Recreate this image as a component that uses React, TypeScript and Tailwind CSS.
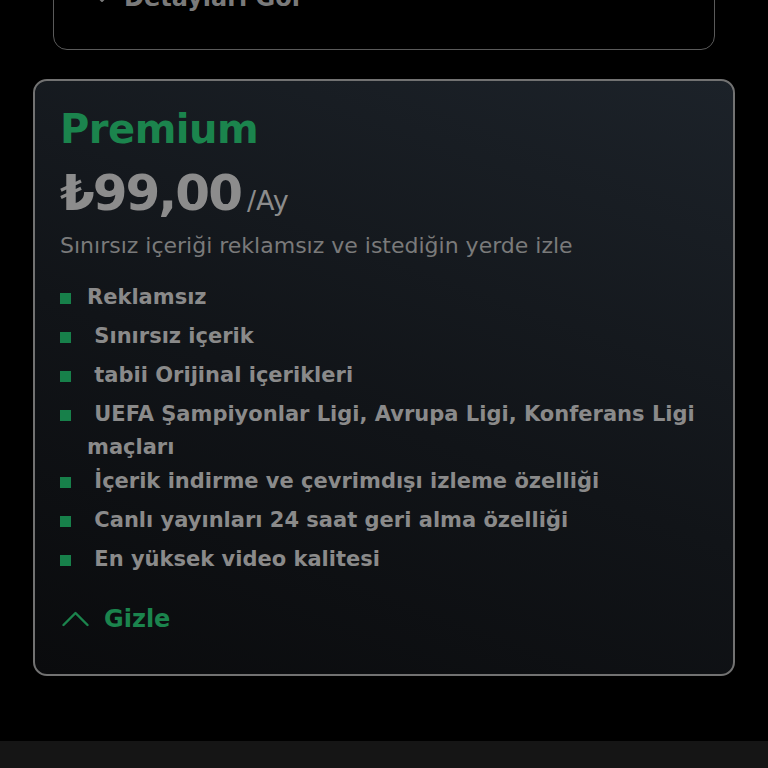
import { ChevronDown } from "lucide-react";

const features = [
  "Reklamsız",
  " Sınırsız içerik",
  " tabii Orijinal içerikleri",
  " UEFA Şampiyonlar Ligi, Avrupa Ligi, Konferans Ligi maçları",
  " İçerik indirme ve çevrimdışı izleme özelliği",
  " Canlı yayınları 24 saat geri alma özelliği",
  " En yüksek video kalitesi",
];

export default function App() {
  return (
    <div
      className="w-[768px] h-[768px] overflow-hidden bg-black flex flex-col"
      style={{ fontFamily: "'DejaVu Sans', Inter, sans-serif" }}
    >
      <div className="mx-[53px] -mt-[31px] h-[81px] rounded-[14px] border-[1.5px] border-[#5a5a5a] px-[36px] pt-[12px] flex items-start gap-[10px] shrink-0">
        <ChevronDown className="w-6 h-8 text-[#7a7a7a]" strokeWidth={2} />
        <span className="text-[24px] leading-8 font-bold text-[#7a7a7a]">Detayları Gör</span>
      </div>

      <div className="mx-[33px] mt-[29px] h-[597px] rounded-[14px] border-2 border-[#727272] bg-[linear-gradient(200deg,#1c2229_0%,#111418_55%,#0a0b0d_100%)] px-[25px] pt-[26px] shrink-0">
        <h2 className="text-[40px] leading-[44px] font-bold text-[#1b844d] tracking-[-0.5px]">Premium</h2>
        <div className="flex items-baseline mt-[14px]">
          <span className="text-[50px] leading-[56px] font-bold text-[#8c8c8c] tracking-[-2px]">₺99,00</span>
          <span className="text-[27px] text-[#8c8c8c] ml-[6px]">/Ay</span>
        </div>
        <p className="text-[22px] leading-7 text-[#7a7a7a] mt-[10px]">
          Sınırsız içeriği reklamsız ve istediğin yerde izle
        </p>
        <ul className="mt-[21px] flex flex-col gap-[6px]">
          {features.map((f, i) => (
            <li key={i} className={i === 3 ? "flex items-start -mb-[5px]" : "flex items-start"}>
              <span className="w-[11px] h-[11px] bg-[#17804a] mt-[12px] shrink-0" />
              <span className="ml-[16px] text-[21px] leading-[33px] font-bold text-[#8a8a8a] whitespace-pre-wrap">
                {f}
              </span>
            </li>
          ))}
        </ul>
        <button className="mt-[27px] ml-[2px] flex items-center gap-[15px] text-[#1b844d]">
          <svg width="27" height="16" viewBox="0 0 27 16" fill="none" stroke="currentColor" strokeWidth="2.4" strokeLinecap="round" strokeLinejoin="round">
            <polyline points="1.5,14 13.5,2 25.5,14" />
          </svg>
          <span className="text-[24px] leading-8 font-bold">Gizle</span>
        </button>
      </div>

      <div className="mt-auto h-[27px] bg-[#151515] shrink-0" />
    </div>
  );
}
